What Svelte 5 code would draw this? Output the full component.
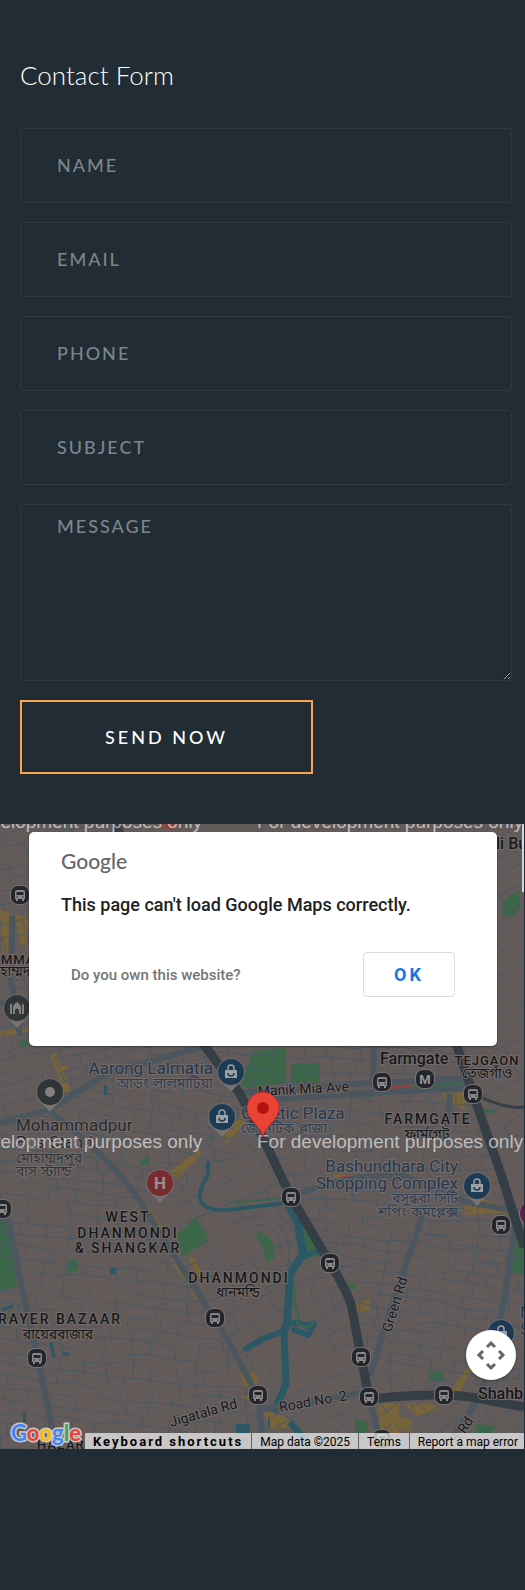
<script>
  const fields = [
    { name: 'name', type: 'text', label: 'NAME' },
    { name: 'email', type: 'email', label: 'EMAIL' },
    { name: 'phone', type: 'tel', label: 'PHONE' },
    { name: 'subject', type: 'text', label: 'SUBJECT' }
  ];

  // Neighbourhoods of small streets: outline, centre, reach, street angle, block size
  const districts = [
    { id: 'nw', points: '0,0 118,0 205,222 130,233 50,287 0,300', cx: 90, cy: 140, reach: 190, angle: -14, block: 11, seed: 3 },
    { id: 'lalmatia', points: '50,287 130,233 205,222 262,312 185,365 150,395 100,330', cx: 155, cy: 300, reach: 120, angle: 12, block: 11, seed: 8 },
    { id: 'west', points: '0,300 50,287 100,330 150,395 185,448 258,582 262,625 0,625', cx: 120, cy: 470, reach: 230, angle: 6, block: 12, seed: 15 },
    { id: 'dhanmondi', points: '262,312 185,365 160,400 205,480 258,582 369,573 350,480 290,373', cx: 270, cy: 460, reach: 170, angle: -24, block: 20, seed: 21 },
    { id: 'tejturi', points: '205,222 455,222 524,420 524,470 418,406 290,373', cx: 380, cy: 310, reach: 190, angle: 3, block: 13, seed: 34 },
    { id: 'green', points: '290,373 418,406 524,430 524,585 369,573 350,480', cx: 420, cy: 480, reach: 180, angle: 8, block: 11, seed: 41 },
    { id: 'east', points: '440,0 524,0 524,400 455,222', cx: 490, cy: 150, reach: 200, angle: -28, block: 17, seed: 52 },
    { id: 'south', points: '258,582 369,573 524,585 524,625 262,625', cx: 400, cy: 600, reach: 150, angle: -35, block: 12, seed: 60 }
  ];

  function random(seed) {
    let value = seed * 7919;
    return () => {
      value = (value * 16807) % 2147483647;
      return value / 2147483647;
    };
  }

  function streets({ cx, cy, reach, angle, block, seed }) {
    const next = random(seed);
    const turn = (angle * Math.PI) / 180;
    const at = (u, v) => {
      const x = cx + u * Math.cos(turn) - v * Math.sin(turn);
      const y = cy + u * Math.sin(turn) + v * Math.cos(turn);
      return `${x.toFixed(1)} ${y.toFixed(1)}`;
    };
    let d = '';
    for (let v = -reach; v < reach; v += block) {
      let y = v;
      d += `M${at(-reach, y)}`;
      for (let u = -reach; u < reach; u += block * 2) {
        y = v + (next() - 0.5) * 5;
        d += `${next() > 0.22 ? 'L' : 'M'}${at(u, y)}`;
        if (next() > 0.2) {
          const x = u + next() * block;
          d += `M${at(x, y)}L${at(x + next() * 3, y + block)}M${at(u, y)}`;
        }
      }
    }
    return d;
  }

  const parks = [
    'M253 227L286 224V259L253 264L240 262Z',
    'M291 240L320 239V259L291 261Z',
    'M177 411L196 393L209 417L182 432Z',
    'M254 411Q277 408 274 435L266 438Q265 421 254 411Z',
    'M0 390L7 397L17 462L0 466Z',
    'M67 437L77 436V447L68 448Z',
    'M301 396L322 426L307 434Z',
    'M524 410L518 410L510 448L524 451Z',
    'M503 76L520 66V84L512 93L502 91Z',
    'M429 548H444V557H429Z',
    'M355 594L368 598V608L355 610Z',
    'M477 600L497 602L490 610H474Z',
    'M18 217L26 215L29 221L21 224Z',
    'M361 267H371V274H361Z',
    'M413 262L462 257V261L413 264Z',
    'M140 335L149 333V341L141 342Z',
    'M256 409L262 407L264 412Z',
    'M346 461L356 459V465L346 466Z',
    'M484 285H494V289H484Z'
  ];

  const shops = [
    'M0 85L9 88V138L3 136Z',
    'M15 90L28 94V122L20 120Z',
    'M50 232L56 229L71 268L66 271Z',
    'M60 242H68V246H60Z',
    'M170 347L200 325L201 331L176 355Z',
    'M222 305L252 283V291L226 321Z',
    'M134 371L140 370L163 404L158 407Z',
    'M170 436L176 433L190 452L183 455Z',
    'M188 433L194 434L204 453L199 455Z',
    'M188 455L193 454L203 476L196 476Z',
    'M240 551L244 549L249 562L245 564Z',
    'M250 549L253 547L259 558L254 561Z',
    'M242 572H250V577H242Z',
    'M262 585L285 593L294 602L272 607Z',
    'M443 270L466 268L465 286L445 276Z',
    'M464 380L478 373L507 383V389L465 391Z',
    'M355 478L370 475V486L358 488Z',
    'M348 493H354L365 528L357 530Z',
    'M378 580L400 579L398 592L412 596V606L396 610H380Z',
    'M404 579H424L438 582V586L416 592Z',
    'M448 571L464 548L471 541V548L458 570Z',
    'M0 207L32 204V208L0 212Z',
    'M331 350H345V354H331Z'
  ];

  const avenues = [
    'M0 300L50 285Q72 272 105 250L205 222',
    'M50 287L100 330Q135 365 152 396L205 480L230 520L258 573L264 625',
    'M240 269L350 260L466 255',
    'M250 277L370 269L466 264',
    'M374 211L373 264',
    'M5 380L25 478L40 545L56 625',
    'M430 358L418 406L386 500L370 552',
    'M291 373Q340 352 400 350L466 378L524 388',
    'M515 402L505 470L498 506L480 572L450 618',
    'M258 586L369 568',
    'M450 270L445 318',
    'M369 573L382 625',
    'M0 180Q60 170 130 150',
    'M12 92Q12 130 10 150L20 212'
  ];

  const highways = [
    'M116 0L205 222L240 270L262 312L291 373L330 439Q350 472 352 485L361 533L369 573',
    'M369 575Q440 568 470 573L524 583',
    'M440 100L457 222L473 270L501 350L524 423'
  ];

  const stops = [
    [20, 71], [382, 258], [473, 270], [291, 373], [501, 401], [330, 439], [215, 494],
    [37, 534], [258, 571], [361, 533], [369, 573], [444, 571], [2, 385], [382, 615]
  ];

  const places = [
    { x: 17, y: 184, kind: 'mosque', color: '#303638' },
    { x: 50, y: 268, kind: 'dot', color: '#303638' },
    { x: 231, y: 248, kind: 'bag', color: '#1d3a54' },
    { x: 222, y: 293, kind: 'bag', color: '#1d3a54' },
    { x: 160, y: 359, kind: 'hospital', color: '#782c30' },
    { x: 477, y: 362, kind: 'bag', color: '#1d3a54' },
    { x: 501, y: 509, kind: 'bag', color: '#1d3a54' },
    { x: 533, y: 389, kind: 'dot', color: '#6d1650' }
  ];

  const labels = [
    { x: 496, y: 25, text: 'li Bu', kind: 'station' },
    { x: 1, y: 140, text: 'MMA', kind: 'small-area' },
    { x: 0, y: 152, text: 'হাম্মদ', kind: 'bangla' },
    { x: 213, y: 250, text: 'Aarong Lalmatia', kind: 'shop', anchor: 'end' },
    { x: 213, y: 264, text: 'আড়ং লালমাটিয়া', kind: 'bangla shop-bangla', anchor: 'end' },
    { x: 16, y: 307, text: 'Mohammadpur', kind: 'poi' },
    { x: 16, y: 324, text: 'Bus Stand', kind: 'poi' },
    { x: 16, y: 339, text: 'মোহাম্মদপুর', kind: 'bangla poi-bangla' },
    { x: 16, y: 352, text: 'বাস স্ট্যান্ড', kind: 'bangla poi-bangla' },
    { x: 241, y: 295, text: 'Genetic Plaza', kind: 'shop' },
    { x: 241, y: 309, text: 'জেনেটিক প্লাজা', kind: 'bangla shop-bangla' },
    { x: 458, y: 348, text: 'Bashundhara City', kind: 'shop', anchor: 'end' },
    { x: 458, y: 365, text: 'Shopping Complex', kind: 'shop', anchor: 'end' },
    { x: 458, y: 379, text: 'বসুন্ধরা সিটি', kind: 'bangla shop-bangla', anchor: 'end' },
    { x: 458, y: 393, text: 'শপিং কমপ্লেক্স', kind: 'bangla shop-bangla', anchor: 'end' },
    { x: 380, y: 240, text: 'Farmgate', kind: 'station' },
    { x: 487, y: 241, text: 'TEJGAON', kind: 'small-area', anchor: 'middle' },
    { x: 487, y: 254, text: 'তেজগাঁও', kind: 'bangla', anchor: 'middle' },
    { x: 428, y: 300, text: 'FARMGATE', kind: 'area', anchor: 'middle' },
    { x: 427, y: 315, text: 'ফার্মগেট', kind: 'bangla', anchor: 'middle' },
    { x: 128, y: 398, text: 'WEST', kind: 'area', anchor: 'middle' },
    { x: 128, y: 414, text: 'DHANMONDI', kind: 'area', anchor: 'middle' },
    { x: 128, y: 429, text: '& SHANGKAR', kind: 'area', anchor: 'middle' },
    { x: 239, y: 459, text: 'DHANMONDI', kind: 'area', anchor: 'middle' },
    { x: 238, y: 473, text: 'ধানমন্ডি', kind: 'bangla', anchor: 'middle' },
    { x: 122, y: 500, text: 'RAYER BAZAAR', kind: 'area', anchor: 'end' },
    { x: 58, y: 515, text: 'রায়েরবাজার', kind: 'bangla', anchor: 'middle' },
    { x: 478, y: 575, text: 'Shahb', kind: 'station' },
    { x: 37, y: 625, text: 'HAZAR', kind: 'small-area' },
    { x: 520, y: 494, text: 'N', kind: 'shop' },
    { x: 520, y: 511, text: 'S', kind: 'shop' },
    { x: 258, y: 272, text: 'Manik Mia Ave', kind: 'road', turn: -3 },
    { x: 171, y: 603, text: 'Jigatala Rd', kind: 'road', turn: -16 },
    { x: 280, y: 588, text: 'Road No. 2', kind: 'road', turn: -10 },
    { x: 391, y: 509, text: 'Green Rd', kind: 'road', turn: -73 },
    { x: 459, y: 620, text: 'n Rd', kind: 'road', turn: -58 }
  ];

  const notices = [
    [-64, 4], [257, 4], [-64, 324], [257, 324]
  ];

  const brand = [
    ['G', 'blue'], ['o', 'red'], ['o', 'yellow'], ['g', 'blue'], ['l', 'green'], ['e', 'red']
  ];

  let dialogOpen = $state(true);
</script>

<main>
  <section class="contact">
    <h2>Contact Form</h2>
    <form onsubmit={(event) => event.preventDefault()}>
      {#each fields as field}
        <input type={field.type} name={field.name} placeholder={field.label} aria-label={field.label} />
      {/each}
      <textarea name="message" placeholder="MESSAGE" aria-label="MESSAGE"></textarea>
      <button class="send" type="submit">SEND NOW</button>
    </form>
  </section>

  <section class="map" aria-label="Map">
    <svg class="tiles" viewBox="0 0 524 625" preserveAspectRatio="xMidYMid slice">
      <defs>
        {#each districts as district}
          <clipPath id={district.id}><polygon points={district.points} /></clipPath>
        {/each}
        <g id="bus">
          <rect x="-10" y="-10" width="20" height="20" rx="8" fill="#777170" />
          <rect x="-9" y="-9" width="18" height="18" rx="7" fill="#23272d" />
          <path d="M-5 -3Q-5 -5 -3 -5H3Q5 -5 5 -3V4H4V6H2V4H-2V6H-4V4H-5Z" fill="#8b8787" />
          <path d="M-3.500 -3H3.500V0H-3.500Z" fill="#23272d" />
          <path d="M-3.500 2H-2M2 2H3.500" stroke="#23272d" />
        </g>
      </defs>

      <rect width="524" height="625" fill="#635b5a" />
      {#each parks as d}<path {d} fill="#3b6648" />{/each}
      {#each shops as d}<path {d} fill="#77643b" />{/each}
      <path d="M160 0H178L175 5H164Z M386 259L412 259V264L388 267Z M340 352H351V356H341Z" fill="#8d4740" />

      <g class="streets">
        {#each districts as district}
          <path d={streets(district)} clip-path="url(#{district.id})" />
        {/each}
        <path d="M245 394Q285 387 289 425Q292 455 264 465M251 402Q280 395 282 430M312 460Q315 451 328 454M312 460Q309 479 325 486Q340 483 344 473" />
      </g>

      <g class="water">
        <path d="M208 337V351Q194 373 204 381Q214 389 236 385L286 379" stroke-width="4" />
        <path d="M288 380L298 399L303 430L290 450L287 500L284 507" stroke-width="8" />
        <path d="M303 434Q312 427 325 430M286 501Q297 496 306 502L314 500L308 511L292 505M284 507L262 515L244 526" stroke-width="6" />
        <path d="M284 507L286 560L274 588M290 598L308 620" stroke-width="7" />
        <path d="M2 486L13 482M51 518L54 534M63 530H69" stroke-width="3" />
        <path d="M23 593H26M236 605H250M104 266H107M268 598H270" stroke-width="10" />
        <circle cx="113" cy="447" r="2" stroke-width="3" />
      </g>
      <path d="M230 379L283 374M296 461Q292 482 299 491Q294 502 303 502Q311 505 315 497M305 390L317 424M309 433L323 430" class="bank" />

      <g class="avenues">
        {#each avenues as d}<path {d} />{/each}
      </g>
      <g class="highways">
        {#each highways as d}<path {d} />{/each}
        <path d="M473 270Q508 286 524 283" stroke-width="3" />
      </g>

      {#each stops as [x, y]}
        <use href="#bus" {x} {y} />
      {/each}
      <g transform="translate(425 255)">
        <rect x="-10" y="-10" width="20" height="20" rx="8" fill="#777170" />
        <rect x="-9" y="-9" width="18" height="18" rx="7" fill="#23272d" />
        <text class="badge" y="5">M</text>
      </g>

      {#each places as place}
        <g transform="translate({place.x} {place.y})">
          <path d="M0 20Q-5 14 -11 9A14 14 0 1 1 11 9Q5 14 0 20Z" fill="#777170" />
          <circle r="13" fill={place.color} />
          {#if place.kind === 'bag'}
            <path d="M-6 -2H6V6H-6Z" fill="#9aa0a4" />
            <path d="M-3 -2V-4A3 3 0 0 1 3 -4V-2" fill="none" stroke="#9aa0a4" stroke-width="1.500" />
            <path d="M-3 1A3 3 0 0 0 3 1" fill="none" stroke={place.color} stroke-width="1.500" />
          {:else if place.kind === 'dot'}
            <circle r="5" fill="#858080" />
          {:else if place.kind === 'hospital'}
            <text class="badge hospital" y="6">H</text>
          {:else}
            <path d="M-7 6V-3L-6 -5L-5 -3V6ZM5 6V-3L6 -5L7 -3V6ZM-4 6V-1Q-4 -3 0 -6Q4 -3 4 -1V6H2V2Q0 -1 -2 2V6Z" fill="#858080" />
          {/if}
        </g>
      {/each}

      {#each labels as label}
        <text
          class="label {label.kind}"
          text-anchor={label.anchor ?? 'start'}
          transform="translate({label.x} {label.y}) rotate({label.turn ?? 0})"
        >{label.text}</text>
      {/each}

      {#each notices as [x, y]}
        <text class="notice" {x} {y}>For development purposes only</text>
      {/each}

      <path d="M263 314C262 302 247 297 247 284A16 16 0 0 1 279 284C279 297 264 302 263 314Z" fill="#ea4335" stroke="#b31412" stroke-width="0.500" />
      <circle cx="263" cy="284" r="6" fill="#b31412" />
    </svg>

    {#if dialogOpen}
      <div class="dialog" role="dialog" aria-label="Google Maps">
        <div class="dialog-logo">Google</div>
        <p>This page can't load Google Maps correctly.</p>
        <div class="dialog-actions">
          <a href="#website">Do you own this website?</a>
          <button type="button" onclick={() => (dialogOpen = false)}>OK</button>
        </div>
      </div>
    {/if}

    <div class="scroll-edge"></div>

    <button class="camera" type="button" aria-label="Map camera controls">
      <svg viewBox="0 0 50 50">
        <path d="M21 17L25 13L29 17M21 34L25 38L29 34M17 21L13 25L17 29M33 21L37 25L33 29" />
      </svg>
    </button>

    <div class="map-footer">
      <a class="brand" href="#google" aria-label="Google">{#each brand as [letter, color]}<span class={color}>{letter}</span>{/each}</a>
      <div class="credits">
        <button type="button">Keyboard shortcuts</button>
        <span>Map data ©2025</span>
        <a href="#terms">Terms</a>
        <a href="#report">Report a map error</a>
      </div>
    </div>
  </section>
</main>

<style>
  :global(body) {
    margin: 0;
    background: #222c34;
  }

  main {
    padding-bottom: 140px;
    font-family: Lato, 'Open Sans', sans-serif;
  }

  .contact {
    padding: 58px 13px 50px 20px;
  }

  h2 {
    margin: 0 0 36px;
    color: #fff;
    font-size: 26px;
    font-weight: 300;
    line-height: 34px;
  }

  form {
    display: flex;
    flex-direction: column;
    gap: 19px;
  }

  input,
  textarea {
    box-sizing: border-box;
    width: 100%;
    height: 75px;
    padding: 0 36px 2px;
    border: 1px solid #303943;
    border-radius: 3px;
    background: transparent;
    color: #fff;
    font-family: inherit;
    font-size: 18px;
    font-weight: 500;
    letter-spacing: 2px;
  }

  textarea {
    display: block;
    height: 177px;
    padding: 9px 36px;
    line-height: 24px;
    resize: vertical;
  }

  input::placeholder,
  textarea::placeholder {
    color: #7b858d;
    opacity: 1;
  }

  .send {
    width: 293px;
    max-width: 100%;
    height: 74px;
    padding-bottom: 2px;
    border: 2px solid #fda34f;
    background: transparent;
    color: #fff;
    font-family: inherit;
    font-size: 18px;
    font-weight: 500;
    letter-spacing: 3px;
    cursor: pointer;
  }

  .map {
    position: relative;
    height: 625px;
    margin-right: 1px;
    overflow: hidden;
    background: #635b5a;
    font-family: Roboto, sans-serif;
  }

  .tiles {
    position: absolute;
    inset: 0;
    width: 100%;
    height: 100%;
  }

  .streets {
    fill: none;
    stroke: #495964;
    stroke-width: 1;
  }

  .water {
    fill: none;
    stroke: #2c5866;
    stroke-linejoin: round;
  }

  .bank {
    fill: none;
    stroke: #3b6648;
    stroke-width: 2;
  }

  .avenues {
    fill: none;
    stroke: #4b565f;
    stroke-width: 6;
    stroke-linejoin: round;
  }

  .highways {
    fill: none;
    stroke: #353d45;
    stroke-width: 9;
    stroke-linejoin: round;
  }

  .label {
    fill: #17191b;
    stroke: #736c6b;
    stroke-width: 2px;
    paint-order: stroke;
    font-size: 17px;
  }

  .station {
    font-size: 16px;
    font-weight: 500;
  }

  .shop {
    fill: #26364d;
  }

  .poi {
    fill: #282b2d;
  }

  .area {
    font-size: 14px;
    font-weight: 500;
    letter-spacing: 2px;
  }

  .small-area {
    font-size: 13px;
    font-weight: 500;
    letter-spacing: 1px;
  }

  .bangla {
    font-family: 'Noto Sans', 'Noto Sans Bengali', sans-serif;
    font-size: 14px;
  }

  .shop-bangla {
    fill: #303d50;
  }

  .poi-bangla {
    fill: #333637;
  }

  .road {
    font-size: 14px;
  }

  .badge {
    fill: #969292;
    font-size: 13px;
    font-weight: 700;
    text-anchor: middle;
  }

  .hospital {
    font-size: 17px;
  }

  .notice {
    fill: #fff;
    fill-opacity: 0.6;
    font-family: 'Liberation Sans', Arial, sans-serif;
    font-size: 19px;
  }

  .dialog {
    position: relative;
    box-sizing: border-box;
    height: 214px;
    margin: 8px 27px 0 29px;
    padding: 15px 42px 0 32px;
    border-radius: 5px;
    background: #fff;
    box-shadow: 0 1px 2px rgba(0, 0, 0, 0.4);
  }

  .dialog-logo {
    color: #646669;
    font-family: Lato, sans-serif;
    font-size: 21px;
    font-weight: 500;
    line-height: 28px;
  }

  .dialog p {
    margin: 18px 0 35px;
    color: #202124;
    font-size: 18px;
    font-weight: 500;
    line-height: 24px;
  }

  .dialog-actions {
    display: flex;
    align-items: center;
    justify-content: space-between;
    padding-left: 10px;
  }

  .dialog-actions a {
    color: #757575;
    font-size: 15px;
    font-weight: 500;
    text-decoration: none;
  }

  .dialog-actions button {
    width: 92px;
    height: 45px;
    border: 1px solid #dadce0;
    border-radius: 4px;
    background: #fff;
    color: #1a73e8;
    font-family: inherit;
    font-size: 18px;
    font-weight: 700;
    letter-spacing: 3px;
    cursor: pointer;
  }

  .scroll-edge {
    position: absolute;
    top: 0;
    right: 0;
    width: 2px;
    height: 68px;
    background: #d5d5d5;
  }

  .camera {
    position: absolute;
    right: 8px;
    bottom: 69px;
    width: 50px;
    height: 50px;
    padding: 0;
    border: 0;
    border-radius: 50%;
    background: #fff;
    box-shadow: 0 1px 3px rgba(0, 0, 0, 0.3);
    cursor: pointer;
  }

  .camera svg {
    display: block;
  }

  .camera path {
    fill: none;
    stroke: #666;
    stroke-width: 3;
  }

  .map-footer {
    position: absolute;
    right: 0;
    bottom: 0;
    left: 0;
    display: flex;
    align-items: flex-end;
    justify-content: space-between;
  }

  .brand {
    margin-left: 11px;
    font-family: Lato, sans-serif;
    font-size: 22px;
    font-weight: 700;
    line-height: 32px;
    text-decoration: none;
    -webkit-text-stroke: 3px #c9c7c7;
    paint-order: stroke fill;
  }

  .blue {
    color: #4285f4;
  }

  .red {
    color: #ea4335;
  }

  .yellow {
    color: #fbbc04;
  }

  .green {
    color: #34a853;
  }

  .credits {
    display: flex;
    height: 16px;
    background: rgba(245, 245, 245, 0.7);
    color: #000;
    font-size: 12px;
    line-height: 18px;
    white-space: nowrap;
  }

  .credits > * {
    padding: 0 8px;
    border: 0;
    border-left: 1px solid #66615f;
    color: inherit;
    text-decoration: none;
  }

  .credits > :last-child {
    padding-right: 6px;
  }

  .credits button {
    border-left: 0;
    background: none;
    font-family: inherit;
    font-size: 13px;
    font-weight: 700;
    letter-spacing: 2px;
    line-height: 18px;
    cursor: pointer;
  }
</style>
